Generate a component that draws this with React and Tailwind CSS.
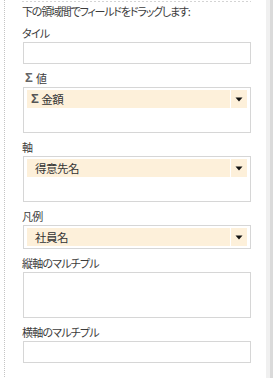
import React from "react";

const font = { fontFamily: '"Noto Sans CJK JP", "Noto Sans", sans-serif', fontFeatureSettings: '"palt"' };

function Label({ children }) {
  return (
    <div className="pt-[6px] pb-[1px] leading-[16px] h-[23px] -ml-px text-[11px] tracking-[-0.8px] text-[#3c3c3c]">{children}</div>
  );
}

function Sigma({ className }) {
  return (
    <span className={`text-[#555] text-[13px] leading-[16px] font-semibold ${className}`} style={{ fontFamily: '"Liberation Sans", sans-serif' }}>Σ</span>
  );
}

function Arrow() {
  return (
    <div className="w-[17px] h-full border-l border-white flex items-center justify-center">
      <svg width="8" height="5" viewBox="0 0 8 5">
        <path d="M0.5 0.5 H7.5 L4 4.5 Z" fill="#111" />
      </svg>
    </div>
  );
}

function Item({ sigma, children }) {
  return (
    <div className="h-[18px] bg-[#fdf0da] flex items-center">
      <div className={`flex-1 flex items-center text-[11.5px] tracking-[-0.5px] text-[#333] leading-[18px] ${sigma ? "pl-[4px]" : "pl-[8px]"}`}>
        {sigma && <Sigma className="mr-[3px]" />}
        <span>{children}</span>
      </div>
      <Arrow />
    </div>
  );
}

function Box({ h, children }) {
  return (
    <div className={`w-[228px] ${h} border border-[#d6d6d6] bg-white pt-[2px] px-[3px]`}>{children}</div>
  );
}

export default function App() {
  return (
    <div className="w-[273px] h-[378px] bg-white flex overflow-hidden" style={font}>
      <div className="w-[4px]" />
      <div className="w-px h-full bg-[repeating-linear-gradient(180deg,#c4c4c4_0_1px,transparent_1px_2px)]" />
      <div className="flex-1 pl-[18px] flex flex-col">
        <div className="h-px mt-px -ml-px w-[229px] bg-[repeating-linear-gradient(90deg,#d4d4d4_0_2px,transparent_2px_4px)]" />
        <div className="mt-px h-[16px] leading-[16px] -ml-px text-[11px] tracking-[-1.2px] text-[#3c3c3c] whitespace-nowrap">下の領域間でフィールドをドラッグします:</div>
        <Label>タイル</Label>
        <Box h="h-[22px]" />
        <Label>
          <span className="flex items-center">
            <Sigma className="ml-[3px] mr-[4px] text-[#666]" />値
          </span>
        </Label>
        <Box h="h-[46px]">
          <Item sigma>金額</Item>
        </Box>
        <Label>軸</Label>
        <Box h="h-[46px]">
          <Item>得意先名</Item>
        </Box>
        <Label>凡例</Label>
        <Box h="h-[24px]">
          <Item>社員名</Item>
        </Box>
        <Label>縦軸のマルチプル</Label>
        <Box h="h-[46px]" />
        <Label>横軸のマルチプル</Label>
        <Box h="h-[22px]" />
      </div>
      <div className="w-[4px] h-full bg-[#f0f0f0]" />
      <div className="w-[3px] h-full bg-[#dadada]" />
    </div>
  );
}
